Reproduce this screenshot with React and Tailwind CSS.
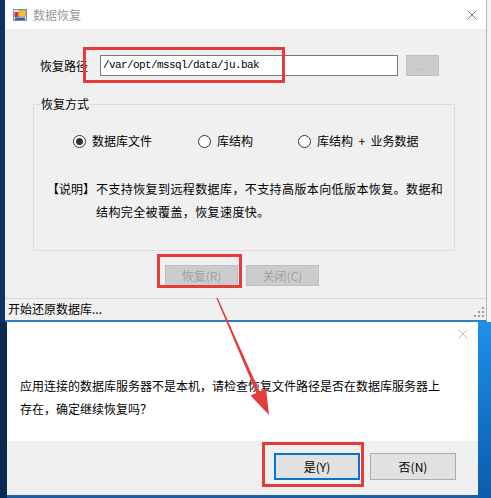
import React from 'react'

const cjk = "font-['Noto_Sans_CJK_SC','Microsoft_YaHei',sans-serif]"

function AppIcon() {
  return (
    <svg width="14" height="12" viewBox="0 0 14 12">
      <rect x="0.5" y="0.5" width="13" height="11" fill="#dfe6ee" stroke="#7d8fa6" />
      <rect x="1.5" y="3" width="4" height="5" fill="#d8322c" />
      <rect x="6" y="1.5" width="6.5" height="6" fill="#f4c430" stroke="#c99a12" strokeWidth="0.6" />
      <rect x="2" y="8.5" width="10" height="2.5" fill="#2f62c6" />
    </svg>
  )
}

function CloseX({ color = '#777', size = 10 }) {
  return (
    <svg width={size} height={size} viewBox="0 0 10 10">
      <path d="M0.5 0.5L9.5 9.5M9.5 0.5L0.5 9.5" stroke={color} strokeWidth="1" />
    </svg>
  )
}

function Grip() {
  return (
    <svg width="12" height="12" viewBox="0 0 12 12">
      {[
        [9, 1],
        [5, 5],
        [9, 5],
        [1, 9],
        [5, 9],
        [9, 9],
      ].map(([x, y]) => (
        <rect key={`${x}-${y}`} x={x} y={y} width="2" height="2" fill="#a0a0a0" />
      ))}
    </svg>
  )
}

function Radio({ checked, label, className }) {
  return (
    <div className={`flex items-center gap-[6px] ${className || ''}`}>
      <span className="grid h-[13px] w-[13px] place-items-center rounded-full border border-[#333] bg-white">
        {checked && <span className="h-[7px] w-[7px] rounded-full bg-[#333]" />}
      </span>
      <span className="whitespace-pre leading-[16px]">{label}</span>
    </div>
  )
}

function Red({ className }) {
  return <div className={`pointer-events-none absolute border-[3px] border-[#e63b3b] ${className}`} />
}

export default function App() {
  return (
    <div className={`relative flex h-[498px] w-[491px] flex-col overflow-hidden bg-[#0b2d55] text-[12px] text-black ${cjk}`}>
      {/* main window */}
      <div className="flex h-[322px]">
        <div className="w-[5px] bg-[#0c3361]" />
        <div className="flex w-[482px] flex-col border-b-2 border-r border-b-[#2f7fc6] border-r-[#b9b9b9] bg-[#f0f0f0]">
          <div className="flex h-[29px] items-center bg-white pl-[8px] pr-[9px]">
            <AppIcon />
            <span className="ml-[6px] text-[#9a9a9a]">数据恢复</span>
            <span className="ml-auto">
              <CloseX color="#7a7a7a" />
            </span>
          </div>

          <div className="mt-[26px] flex h-[21px] items-center pl-[35px]">
            <span className="w-[60px]">恢复路径</span>
            <div className="flex h-[21px] w-[298px] items-center border border-[#7a7a7a] bg-white pl-[2px] font-['Liberation_Mono',monospace] text-[11px] tracking-[-0.6px]">
              /var/opt/mssql/data/ju.bak
            </div>
            <div className="ml-[8px] flex h-[21px] w-[33px] items-center justify-center border border-[#bfbfbf] bg-[#cccccc] text-[10px] text-[#b4b4b4]">
              ....
            </div>
          </div>

          <fieldset className="ml-[28px] mt-[20px] h-[155px] w-[422px] border border-[#dcdcdc] pl-[6px]">
            <legend className="px-px leading-[16px]">恢复方式</legend>
            <div className="mt-[21px] flex h-[16px] items-center pl-[33px]">
              <Radio checked label="数据库文件" className="w-[125px]" />
              <Radio label="库结构" className="w-[100px]" />
              <Radio label="库结构  +  业务数据" />
            </div>
            <div className="mt-[28px] pl-[7px] leading-[23px]">
              <div className="flex whitespace-nowrap">
                <span className="w-[49px] shrink-0">【说明】</span>
                <span className="tracking-[0.4px]">不支持恢复到远程数据库，不支持高版本向低版本恢复。数据和</span>
              </div>
              <div className="flex whitespace-nowrap">
                <span className="w-[49px] shrink-0" />
                <span className="tracking-[0.4px]">结构完全被覆盖，恢复速度快。</span>
              </div>
            </div>
          </fieldset>

          <div className="mt-[14px] flex h-[21px] gap-[8px] pl-[160px]">
            <div className="flex w-[73px] items-center justify-center border border-[#bfbfbf] bg-[#cccccc] text-[#a0a0a0]">
              恢复(R)
            </div>
            <div className="flex w-[73px] items-center justify-center border border-[#bfbfbf] bg-[#cccccc] text-[#a0a0a0]">
              关闭(C)
            </div>
          </div>

          <div className="mt-[12px] flex h-[22px] items-end justify-between border-t border-[#d7d7d7] pl-[3px] pr-[1px]">
            <span className="mb-[3px] leading-[16px]">开始还原数据库...</span>
            <span className="mb-[2px]">
              <Grip />
            </span>
          </div>
        </div>
        <div className="flex-1 bg-[#f3f3f3]" />
      </div>

      {/* message box */}
      <div className="flex h-[176px]">
        <div className="w-[7px] bg-[#0a2a50]" />
        <div className="flex w-[471px] flex-col border-b-[3px] border-[#1f5fa3] bg-white">
          <div className="flex h-[119px] flex-col">
            <div className="flex justify-end pr-[10px] pt-[7px]">
              <CloseX color="#bdbdbd" size={10} />
            </div>
            <div className="mt-[35px] pl-[13px] leading-[23px]">
              <div>应用连接的数据库服务器不是本机，请检查恢复文件路径是否在数据库服务器上</div>
              <div>存在，确定继续恢复吗？</div>
            </div>
          </div>
          <div className="flex flex-1 justify-end gap-[10px] bg-[#f0f0f0] pr-[22px] pt-[12px]">
            <div className="flex h-[27px] w-[86px] items-center justify-center border-2 border-[#0078d7] bg-[#e1e1e1]">
              是(Y)
            </div>
            <div className="flex h-[27px] w-[86px] items-center justify-center border border-[#adadad] bg-[#e1e1e1]">
              否(N)
            </div>
          </div>
        </div>
        <div className="flex-1 bg-gradient-to-b from-[#1e90e8] to-[#0b5cad]" />
      </div>

      {/* annotations */}
      <Red className="left-[83px] top-[47px] h-[36px] w-[202px]" />
      <Red className="left-[157px] top-[254px] h-[34px] w-[85px]" />
      <Red className="left-[262px] top-[442px] h-[45px] w-[102px]" />
      <svg className="pointer-events-none absolute left-0 top-0" width="491" height="498" viewBox="0 0 491 498">
        <polygon points="216.3,298 217.7,298 259.8,392 256.6,393.4" fill="#e63b3b" />
        <polygon points="269,415 266,388.5 250.5,395.5" fill="#e63b3b" />
      </svg>
    </div>
  )
}
